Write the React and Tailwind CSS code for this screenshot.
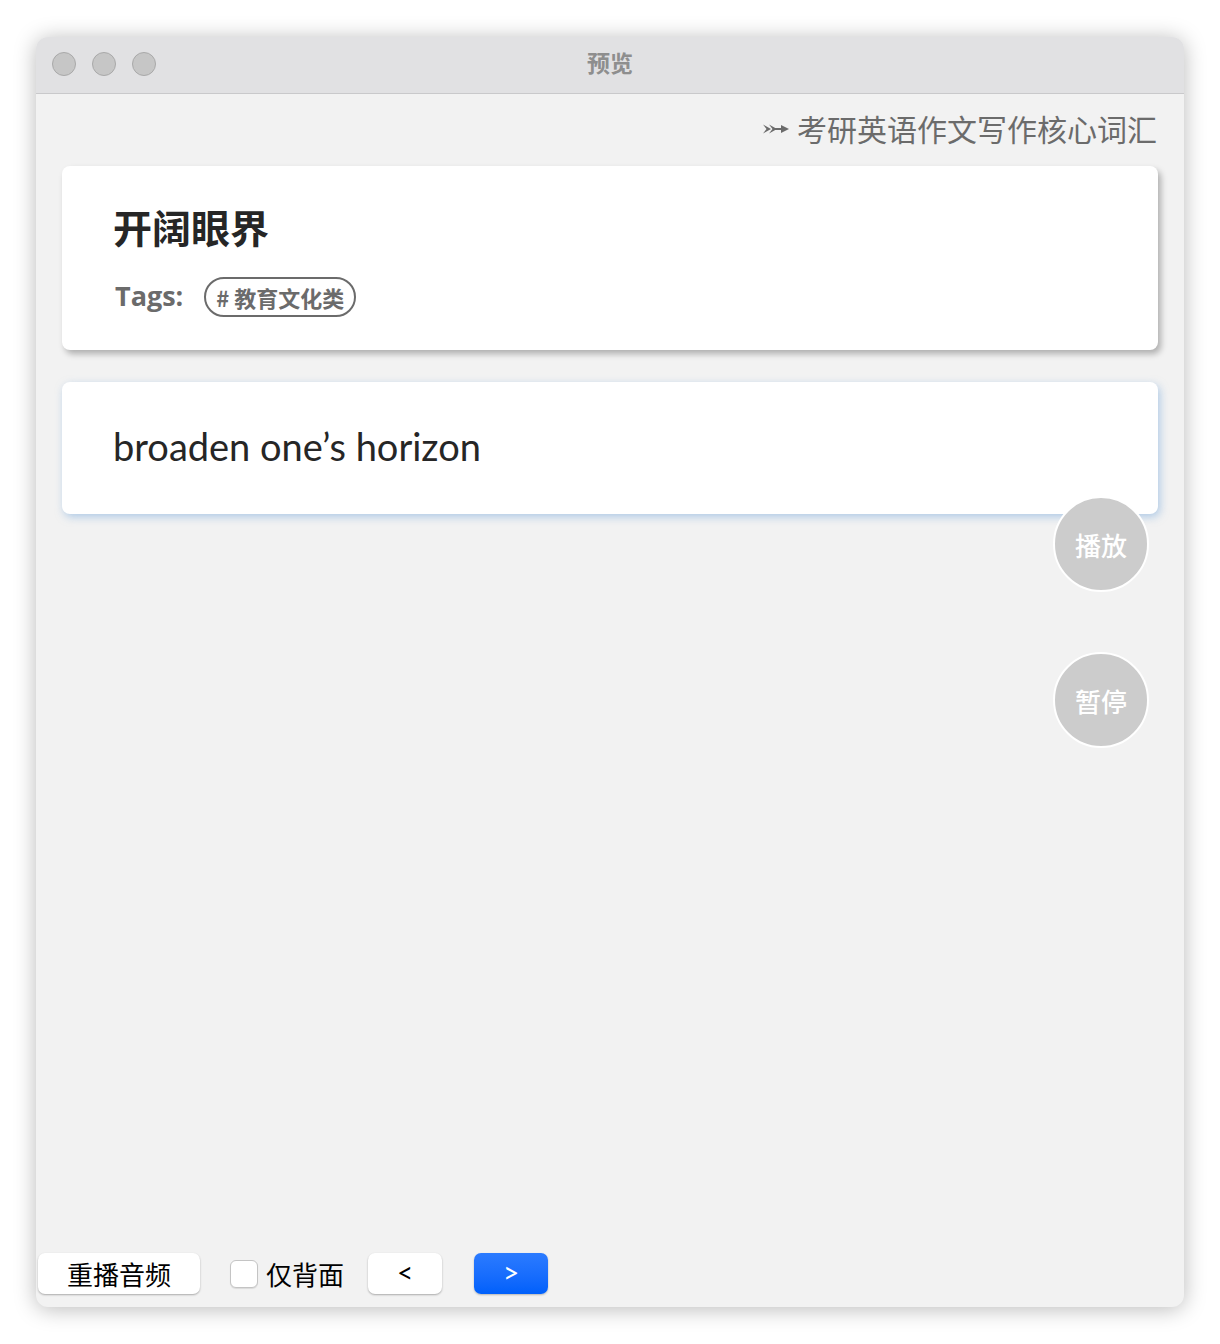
import React, { useState } from 'react';

const cjk = { fontFamily: '"Noto Sans CJK SC", "Noto Sans", sans-serif' };
const latin = { fontFamily: 'Lato, "Noto Sans CJK SC", sans-serif' };
const tagFont = { fontFamily: '"Open Sans", "Noto Sans CJK SC", sans-serif' };

const ArrowIcon = () => (
  <svg width="26" height="14" viewBox="0 0 26 14" className="mr-[8px] mt-[2px]">
    <path d="M0 2.5 L8 7 L0 11.5 L3.5 7 Z" fill="#6b6b6b" />
    <path d="M6 2.5 L14 7 L6 11.5 L9.5 7 Z" fill="#6b6b6b" />
    <rect x="10" y="6" width="9" height="2" fill="#6b6b6b" />
    <path d="M18 3 L26 7 L18 11 Z" fill="#6b6b6b" />
  </svg>
);

const CircleButton = ({ label, className = '' }) => (
  <button
    type="button"
    className={`absolute w-[96px] h-[96px] rounded-full bg-[#cccccc] border-2 border-white text-white text-[26px] font-medium flex items-center justify-center ${className}`}
    style={cjk}
  >
    {label}
  </button>
);

export default function App() {
  const [backOnly, setBackOnly] = useState(false);

  return (
    <div className="w-[1220px] h-[1344px] bg-white pt-[37px] pl-[36px]" style={cjk}>
      <div className="w-[1148px] h-[1270px] rounded-[12px] bg-[#f2f2f2] shadow-[0_2px_22px_rgba(0,0,0,0.28)] flex flex-col overflow-hidden">
        {/* Title bar */}
        <div className="relative h-[57px] bg-[#e1e1e3] border-b border-[#c9c9cb] flex items-center justify-center shrink-0">
          <div className="absolute left-[16px] top-[15px] flex gap-[16px]">
            <span className="w-[24px] h-[24px] rounded-full bg-[#c6c6c6] border border-[#a9a9a9]" />
            <span className="w-[24px] h-[24px] rounded-full bg-[#c6c6c6] border border-[#a9a9a9]" />
            <span className="w-[24px] h-[24px] rounded-full bg-[#c6c6c6] border border-[#a9a9a9]" />
          </div>
          <span className="text-[23px] font-bold text-[#8e8e8e] leading-none mb-[6px]">预览</span>
        </div>

        {/* Content */}
        <div className="relative flex-1 px-[26px]">
          <div className="h-[72px] flex items-center justify-end pr-[1px] pb-[4px]">
            <ArrowIcon />
            <span className="text-[30px] text-[#6b6b6b] leading-none">考研英语作文写作核心词汇</span>
          </div>

          <div className="bg-white rounded-[8px] shadow-[3px_4px_6px_rgba(0,0,0,0.28)] pl-[51px] pt-[37px] pb-[33px]">
            <div className="text-[39px] font-bold text-[#262626] leading-[46px]">开阔眼界</div>
            <div className="mt-[28px] flex items-center">
              <span className="text-[27px] font-bold text-[#6b6b6b] ml-[2px] mb-[4px] leading-none" style={tagFont}>Tags:</span>
              <span className="ml-[21px] h-[40px] px-[10px] rounded-full border-2 border-[#6b6b6b] text-[22px] font-bold text-[#6b6b6b] flex items-center">
                #&nbsp;教育文化类
              </span>
            </div>
          </div>

          <div className="mt-[32px] h-[132px] bg-white rounded-[8px] shadow-[2px_3px_8px_rgba(120,170,220,0.55)] pl-[51px] pb-[4px] flex items-center">
            <span className="text-[38px] text-[#262626]" style={latin}>broaden one’s horizon</span>
          </div>

          <CircleButton label="播放" className="right-[35px] top-[402px]" />
          <CircleButton label="暂停" className="right-[35px] top-[558px]" />
        </div>

        {/* Bottom bar */}
        <div className="h-[54px] pl-[2px] flex items-start shrink-0">
          <button
            type="button"
            className="w-[162px] h-[41px] bg-white rounded-[7px] shadow-[0_1px_2px_rgba(0,0,0,0.3)] text-[26px] text-black flex items-center justify-center"
          >
            重播音频
          </button>
          <label className="ml-[30px] h-[41px] flex items-center cursor-pointer">
            <input
              type="checkbox"
              checked={backOnly}
              onChange={(e) => setBackOnly(e.target.checked)}
              className="appearance-none w-[28px] h-[28px] rounded-[6px] bg-white border border-[#c4c4c4] shadow-[0_1px_1px_rgba(0,0,0,0.1)]"
            />
            <span className="ml-[8px] text-[26px] text-black">仅背面</span>
          </label>
          <button
            type="button"
            className="ml-[24px] w-[74px] h-[41px] bg-white rounded-[7px] shadow-[0_1px_2px_rgba(0,0,0,0.3)] text-[28px] text-black flex items-center justify-center pb-[3px]"
            style={latin}
          >
            &lt;
          </button>
          <button
            type="button"
            className="ml-[32px] w-[74px] h-[41px] rounded-[7px] bg-gradient-to-b from-[#2b7bff] to-[#0060fb] shadow-[0_1px_2px_rgba(0,0,0,0.25)] text-[28px] text-white flex items-center justify-center pb-[3px]"
            style={latin}
          >
            &gt;
          </button>
        </div>
      </div>
    </div>
  );
}
